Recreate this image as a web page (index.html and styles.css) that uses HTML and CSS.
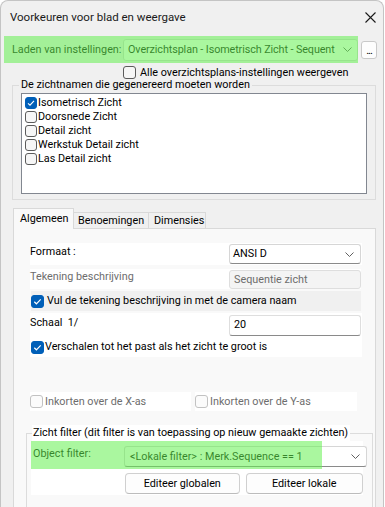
FILE: index.html
```html
<!DOCTYPE html>
<html lang="nl">
<head>
    <meta charset="UTF-8">
    <title>Voorkeuren voor blad en weergave</title>
    <link rel="stylesheet" href="styles.css">
</head>
<body>
    <div class="window">
        <!-- titelbalk -->
        <div class="titlebar">
            <span class="title">Voorkeuren voor blad en weergave</span>
            <svg class="close" width="11" height="11" viewBox="0 0 11 11">
                <path d="M0.5 0.5 L10.5 10.5 M10.5 0.5 L0.5 10.5" stroke="#1a1a1a" stroke-width="1.1" fill="none"/>
            </svg>
        </div>

        <!-- instellingen laden -->
        <div class="load-row">
            <div class="load-main">
                <span class="load-label">Laden van instellingen:</span>
                <div class="combo load-combo">
                    <span class="combo-text">Overzichtsplan - Isometrisch Zicht - Sequent</span>
                    <svg class="chevron" width="9" height="5" viewBox="0 0 9 5"><polyline points="0.5,0.5 4.5,4.5 8.5,0.5" fill="none" stroke="#606060"/></svg>
                </div>
                <div class="highlight"></div>
            </div>
            <div class="more-btn">...</div>
        </div>

        <div class="cb-row show-all">
            <span class="cb"></span>
            <span>Alle overzichtsplans-instellingen weergeven</span>
        </div>

        <!-- zichtnamen -->
        <fieldset class="group views">
            <legend>De zichtnamen die gegenereerd moeten worden</legend>
            <div class="listbox">
                <div class="list-item"><span class="cb small checked"><svg width="12" height="12" viewBox="0 0 12 12"><polyline points="3,6.3 5,8.2 9,3.8" fill="none" stroke="#fff" stroke-width="1.1"/></svg></span>Isometrisch Zicht</div>
                <div class="list-item"><span class="cb small"></span>Doorsnede Zicht</div>
                <div class="list-item"><span class="cb small"></span>Detail zicht</div>
                <div class="list-item"><span class="cb small"></span>Werkstuk Detail zicht</div>
                <div class="list-item"><span class="cb small"></span>Las Detail zicht</div>
            </div>
        </fieldset>

        <!-- tabbladen -->
        <div class="tabs">
            <div class="tab active">Algemeen</div>
            <div class="tab tab-names">Benoemingen</div>
            <div class="tab tab-dims">Dimensies</div>
        </div>

        <div class="panel">
            <div class="band row-format">
                <span class="field-label">Formaat :</span>
                <div class="combo format-combo">
                    <span>ANSI D</span>
                    <svg class="chevron" width="9" height="5" viewBox="0 0 9 5"><polyline points="0.5,0.5 4.5,4.5 8.5,0.5" fill="none" stroke="#606060"/></svg>
                </div>
            </div>

            <div class="band row-desc">
                <span class="field-label disabled">Tekening beschrijving</span>
                <div class="input input-disabled">Sequentie zicht</div>
            </div>

            <div class="band grey row-camera">
                <span class="cb checked"><svg width="13" height="13" viewBox="0 0 13 13"><polyline points="3.3,6.8 5.4,8.8 9.7,4.3" fill="none" stroke="#fff" stroke-width="1.2"/></svg></span>
                <span>Vul de tekening beschrijving in met de camera naam</span>
            </div>

            <div class="band row-scale">
                <span class="field-label">Schaal&nbsp;&nbsp;1/</span>
                <div class="input scale-input">20</div>
            </div>

            <div class="band row-fit">
                <span class="cb checked"><svg width="13" height="13" viewBox="0 0 13 13"><polyline points="3.3,6.8 5.4,8.8 9.7,4.3" fill="none" stroke="#fff" stroke-width="1.2"/></svg></span>
                <span>Verschalen tot het past als het zicht te groot is</span>
            </div>

            <div class="crop-row">
                <div class="band crop-x">
                    <span class="cb disabled-cb"></span>
                    <span class="disabled">Inkorten over de X-as</span>
                </div>
                <div class="band crop-y">
                    <span class="cb disabled-cb"></span>
                    <span class="disabled">Inkorten over de Y-as</span>
                </div>
            </div>

            <!-- zicht filter -->
            <fieldset class="group filter">
                <legend>Zicht filter (dit filter is van toepassing op nieuw gemaakte zichten)</legend>
                <div class="filter-body">
                    <div class="filter-row">
                        <span class="filter-label">Object filter:</span>
                        <div class="combo filter-combo">
                            <span>&lt;Lokale filter&gt; : Merk.Sequence == 1</span>
                            <svg class="chevron" width="9" height="5" viewBox="0 0 9 5"><polyline points="0.5,0.5 4.5,4.5 8.5,0.5" fill="none" stroke="#606060"/></svg>
                        </div>
                        <div class="highlight"></div>
                    </div>
                    <div class="button-row">
                        <div class="btn btn-global">Editeer globalen</div>
                        <div class="btn btn-local">Editeer lokale</div>
                    </div>
                </div>
            </fieldset>
        </div>
    </div>
</body>
</html>
```

FILE: styles.css
```css
* {
    margin: 0;
    padding: 0;
    box-sizing: border-box;
}

body {
    font-family: Roboto, 'Liberation Sans', sans-serif;
    font-size: 10.8px;
    line-height: 14px;
    color: #000;
    white-space: nowrap;
    background-color: #FFFFFF;
}

.window {
    width: 384px;
    height: 507px;
    background-color: #f0f0f0;
    border: 1px solid #c4c4c4;
    border-bottom: none;
    border-radius: 8px 8px 0 0;
    overflow: hidden;
    display: flex;
    flex-direction: column;
}

.titlebar {
    height: 32px;
    flex: none;
    display: flex;
    align-items: center;
    justify-content: space-between;
    padding: 0 7px 0 9px;
}

.title {
    font-size: 11.5px;
    color: #1a1a1a;
}

/* laden van instellingen */
.load-row {
    display: flex;
    align-items: center;
    margin: 3px 0 0 3px;
}

.load-main {
    position: relative;
    width: 354px;
    height: 27px;
    display: flex;
    align-items: center;
    padding-left: 8px;
}

.load-label {
    width: 111px;
    flex: none;
}

.highlight {
    position: absolute;
    left: 0;
    top: 0;
    width: 100%;
    height: 100%;
    background: rgba(100, 240, 80, 0.55);
    pointer-events: none;
}

.combo {
    display: flex;
    align-items: center;
    justify-content: space-between;
    background: #fff;
    border: 1px solid #d6d6d6;
    border-bottom-color: #8a8a8a;
    border-radius: 3px;
    padding: 0 6px 0 4px;
}

.load-combo {
    width: 235px;
    height: 22px;
    gap: 3px;
    padding-right: 5px;
    border-bottom-color: #d6d6d6;
}

.combo-text {
    letter-spacing: -0.1px;
}

.chevron {
    flex: none;
}

.more-btn {
    width: 16px;
    height: 18px;
    margin-left: 3px;
    border: 1px solid #c9c9c9;
    border-radius: 3px;
    background: #fdfdfd;
    font-size: 11px;
    line-height: 18px;
    text-align: center;
    letter-spacing: -1px;
}

/* checkboxen */
.cb-row {
    display: flex;
    align-items: center;
    gap: 4px;
}

.show-all {
    margin: 3px 0 0 122px;
    height: 13px;
}

.cb {
    flex: none;
    width: 13px;
    height: 13px;
    border: 1px solid #5b5b5b;
    border-radius: 3px;
    background: #f6f6f6;
    display: flex;
}

.cb svg {
    margin: -1px;
}

.cb.small {
    width: 12px;
    height: 12px;
}

.cb.checked {
    background: #005fb8;
    border-color: #005fb8;
}

.cb.disabled-cb {
    border-color: #c2c2c2;
    background: #fbfbfb;
}

/* groepen */
.group {
    border: 1px solid #dcdcdc;
}

.group legend {
    padding: 0 2px;
    line-height: 14px;
}

.views {
    width: 363px;
    margin: -1px 0 0 11px;
    padding: 1px 8px 5px 6px;
}

.listbox {
    margin-left: 2px;
    width: 346px;
    height: 101px;
    background: #fff;
    border: 1px solid #828790;
    padding: 2px 0 0 3px;
}

.list-item {
    height: 14px;
    display: flex;
    align-items: center;
    gap: 1px;
}

/* tabbladen */
.tabs {
    display: flex;
    align-items: flex-end;
    height: 20px;
    margin: 8px 0 0 12px;
    position: relative;
    z-index: 1;
}

.tab {
    height: 16px;
    border: 1px solid #d9d9d9;
    border-bottom: none;
    border-left: none;
    background: #f0f0f0;
    line-height: 15px;
    padding: 0 4px;
}

.tab.active {
    height: 21px;
    margin-bottom: -1px;
    width: 61px;
    border-left: 1px solid #d9d9d9;
    background: #f9f9f9;
    padding: 2px 0 0 6px;
}

.tab-names {
    width: 75px;
}

.tab-dims {
    width: 57px;
    padding-left: 5px;
}

.panel {
    flex: 1;
    width: 363px;
    margin-left: 12px;
    background: #f9f9f9;
    border: 1px solid #d9d9d9;
    padding: 14px 0 0 16px;
}

.band {
    display: flex;
    align-items: center;
    background: #fff;
}

.band.grey {
    background: #f0f0f0;
}

.field-label {
    width: 199px;
    flex: none;
    align-self: flex-start;
}

.disabled {
    color: #6d6d6d;
}

.row-format {
    width: 332px;
    height: 22px;
}

.row-format .field-label {
    padding-top: 2px;
}

.format-combo {
    width: 132px;
    height: 20px;
    padding-left: 3px;
}

.row-desc {
    width: 331px;
    height: 20px;
    margin-top: 4px;
}

.row-desc .field-label {
    padding-top: 1px;
}

.input {
    width: 132px;
    border: 1px solid #dedede;
    border-radius: 3px;
    padding-left: 4px;
    display: flex;
    align-items: center;
}

.input-disabled {
    height: 19px;
    margin-top: 1px;
    align-self: flex-start;
    background: #f4f4f4;
    color: #6d6d6d;
}

.row-camera {
    width: 330px;
    height: 20px;
    margin: 2px 0 0 1px;
    gap: 3px;
}

.row-scale {
    width: 332px;
    height: 24px;
    margin-top: 2px;
}

.row-scale .field-label {
    padding-top: 3px;
}

.scale-input {
    height: 21px;
    background: #fff;
    border-bottom-color: #8a8a8a;
}

.row-fit {
    width: 332px;
    height: 20px;
    padding-left: 1px;
    gap: 1px;
}

.crop-row {
    display: flex;
    gap: 4px;
    margin-top: 35px;
}

.crop-row .band {
    height: 19px;
    gap: 2px;
}

.crop-x {
    width: 161px;
}

.crop-y {
    width: 162px;
}

/* zicht filter */
.filter {
    width: 347px;
    margin: 14px 0 0 -4px;
    padding: 0 0 12px 4px;
}

.filter legend {
    width: 318px;
    margin-left: 1px;
    padding: 0 0 0 1px;
    line-height: 16px;
    background: #fff;
}

.filter-body {
    width: 332px;
    background: #fff;
    padding-bottom: 1px;
}

.filter-row {
    position: relative;
    height: 28px;
    display: flex;
    align-items: flex-start;
}

.filter-row .highlight {
    width: 291px;
}

.filter-label {
    width: 93px;
    flex: none;
    padding: 6px 0 0 2px;
}

.filter-combo {
    width: 243px;
    height: 21px;
    margin-top: 5px;
    flex: none;
    padding-left: 5px;
}

.button-row {
    display: flex;
    gap: 6px;
    margin: 4px 0 0 94px;
}

.btn {
    height: 21px;
    border: 1px solid #d0d0d0;
    border-bottom-color: #bcbcbc;
    border-radius: 4px;
    background: #fdfdfd;
    text-align: center;
    line-height: 19px;
}

.btn-global {
    width: 115px;
}

.btn-local {
    width: 118px;
}
```
